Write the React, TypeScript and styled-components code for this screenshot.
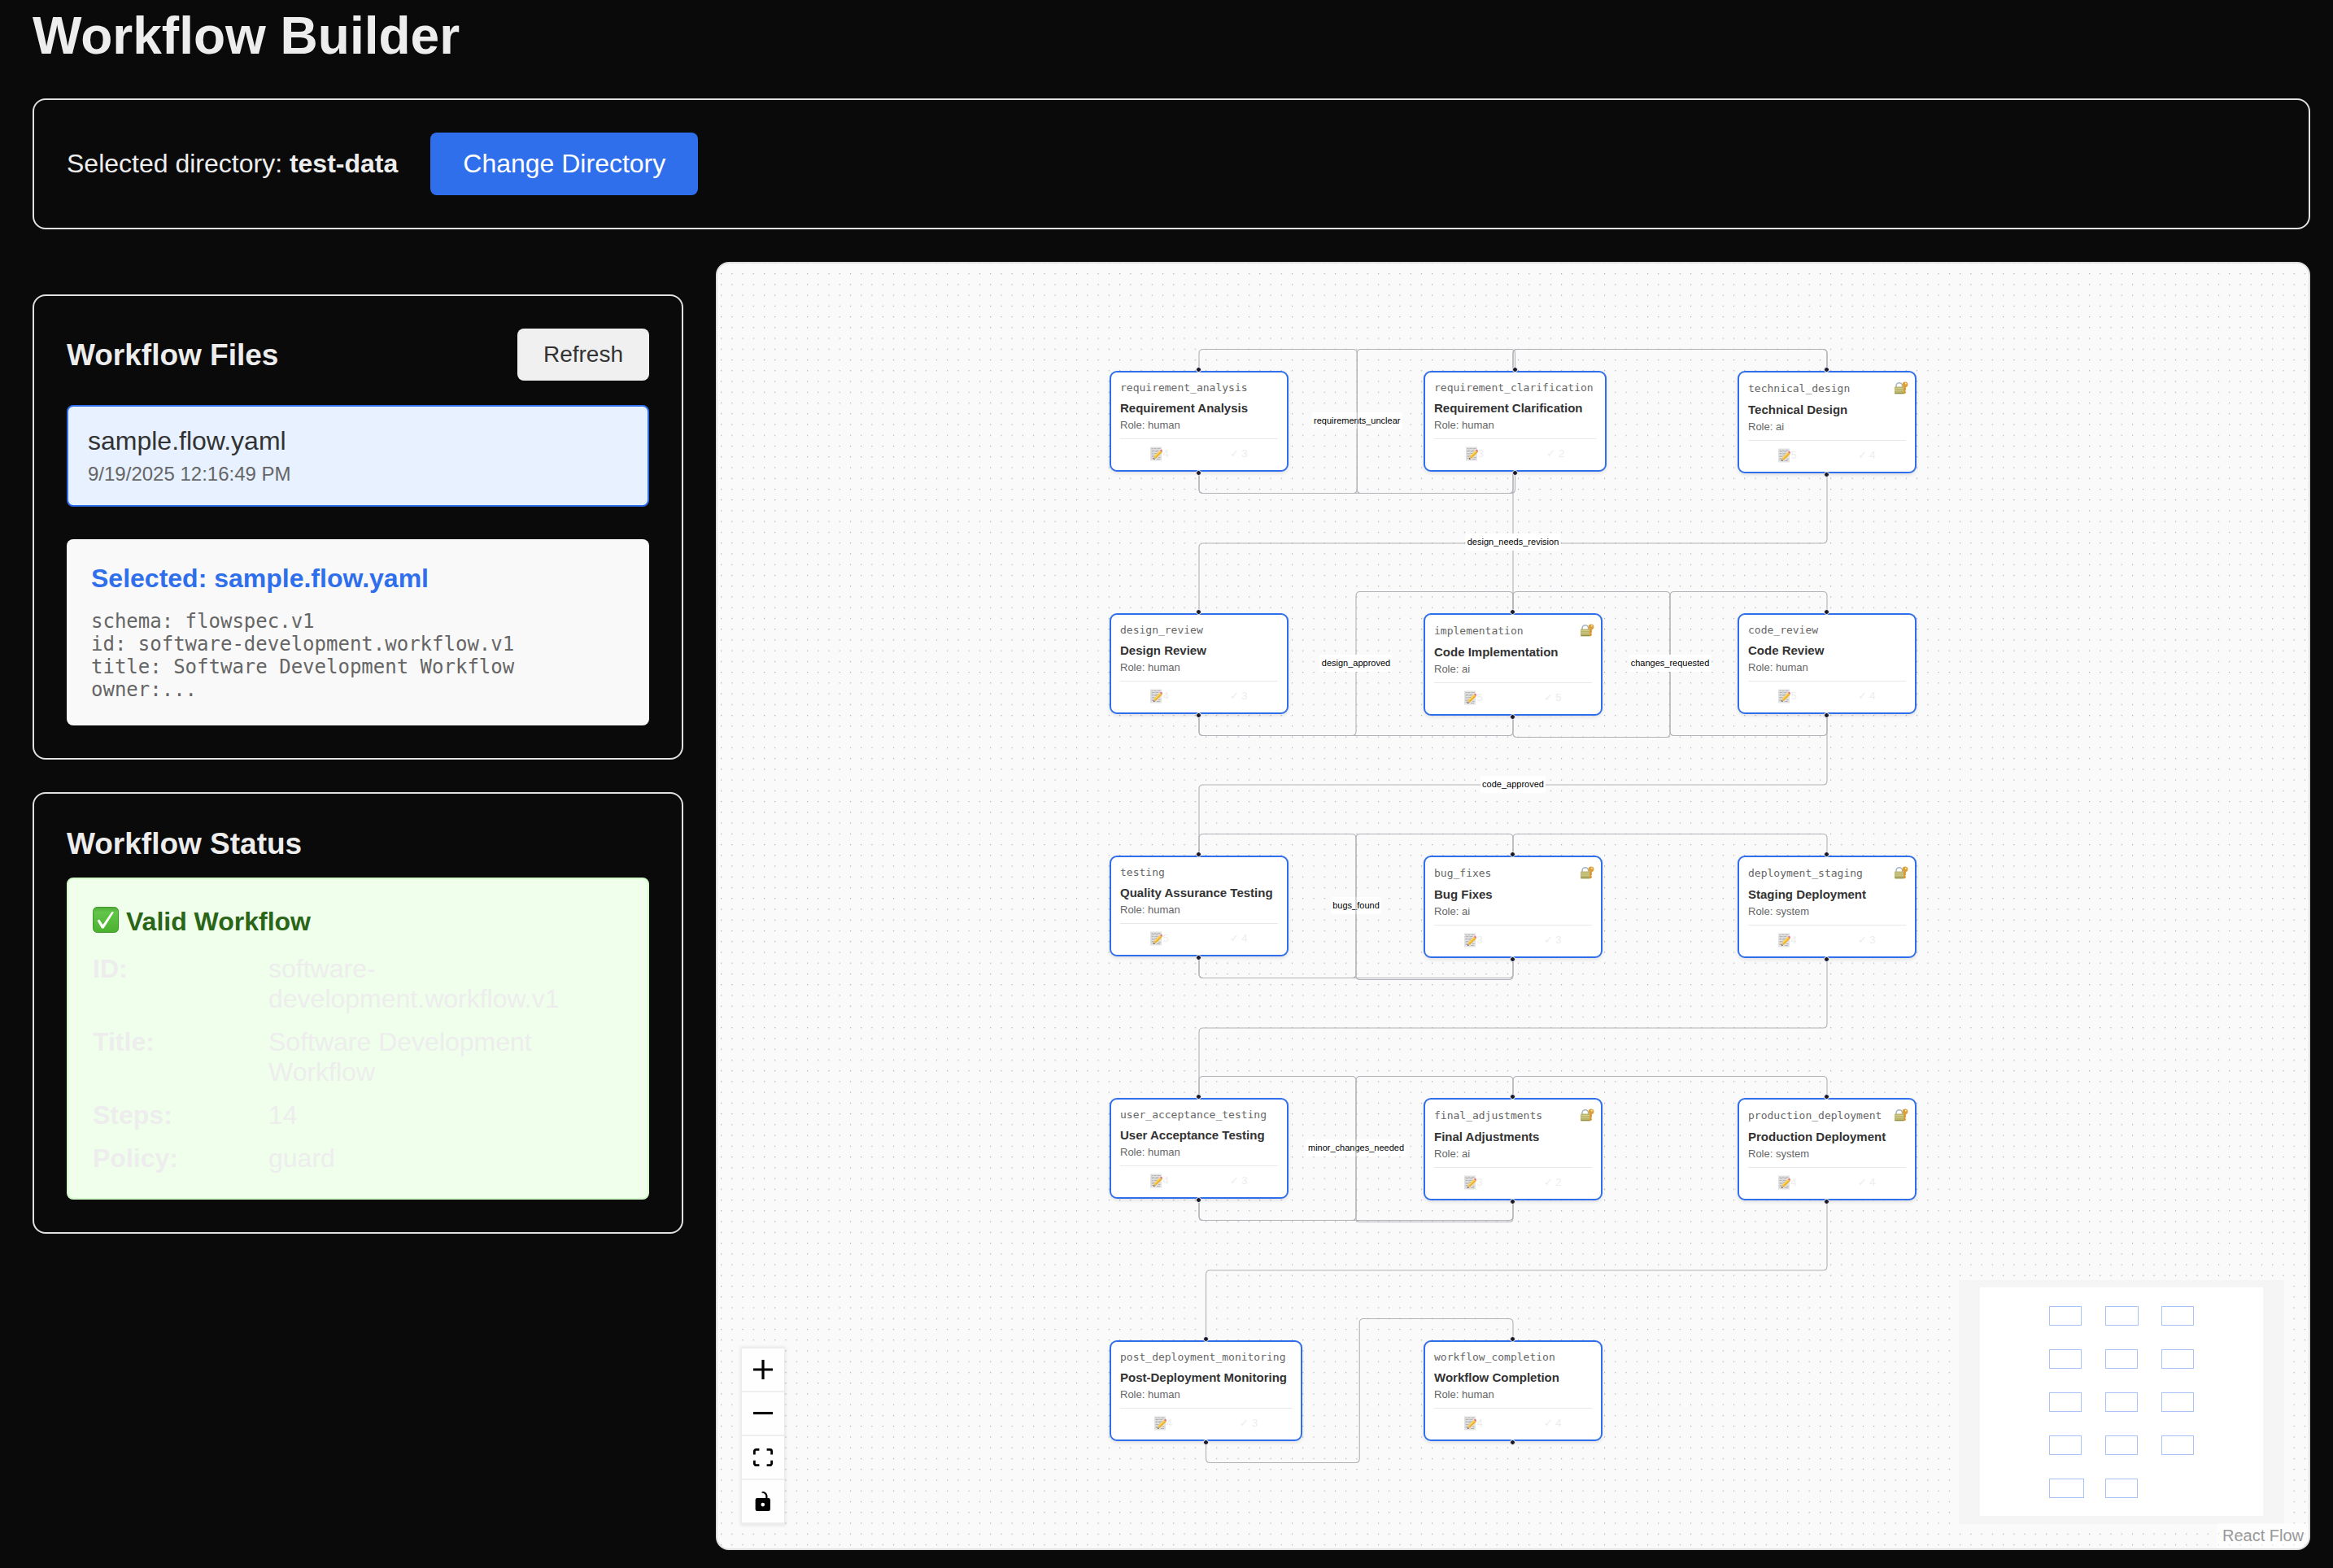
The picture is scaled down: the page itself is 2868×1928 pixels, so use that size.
import React from "react";
import styled, { createGlobalStyle } from "styled-components";

const SANS = `"Liberation Sans", Arial, Helvetica, sans-serif`;
const MONO = `"DejaVu Sans Mono", Menlo, monospace`;
const BLUE = "#2f6feb";

const GlobalStyle = createGlobalStyle`
  *, *::before, *::after { box-sizing: border-box; }
  body {
    margin: 0;
    background: #0a0a0a;
    color: #ededed;
    font-family: ${SANS};
    font-size: 32px;
    line-height: 37px;
  }
  h1, h2, h3, h4, p, pre, dl, dd { margin: 0; }
  button { font-family: inherit; cursor: pointer; }
`;

/* ---------- page ---------- */

const Page = styled.div`
  display: flex;
  flex-direction: column;
  gap: 40px;
  min-height: 100vh;
  padding: 8px 28px 22px 40px;
`;

const PageTitle = styled.h1`
  font-size: 64px;
  line-height: 73px;
  font-weight: 700;
`;

const Panel = styled.section`
  padding: 40px;
  border: 2px solid #e0e0e0;
  border-radius: 16px;
`;

const DirectoryBar = styled(Panel)`
  display: flex;
  align-items: center;
  gap: 40px;
`;

const PrimaryButton = styled.button`
  padding: 20px 40px;
  border: 0;
  border-radius: 8px;
  background: ${BLUE};
  color: #fff;
  font-size: 32px;
  line-height: 37px;
`;

const SecondaryButton = styled.button`
  padding: 16px 32px;
  border: 0;
  border-radius: 8px;
  background: #f0f0f0;
  color: #333;
  font-size: 28px;
  line-height: 32px;
`;

const Main = styled.main`
  flex: 1;
  display: grid;
  grid-template-columns: 800px minmax(0, 1fr);
  gap: 40px;
`;

const Sidebar = styled.aside`
  display: flex;
  flex-direction: column;
  gap: 40px;
  padding-top: 40px;
`;

const PanelHeader = styled.div`
  display: flex;
  align-items: center;
  justify-content: space-between;
  margin-bottom: 30px;
`;

const PanelTitle = styled.h2`
  font-size: 37px;
  line-height: 43px;
  font-weight: 700;
`;

const FileItem = styled.button`
  display: flex;
  flex-direction: column;
  gap: 8px;
  width: 100%;
  padding: 24px;
  border: 2px solid ${BLUE};
  border-radius: 8px;
  background: #e7f1ff;
  text-align: left;
`;

const FileName = styled.span`
  color: #333;
  font-size: 32px;
  line-height: 37px;
`;

const FileDate = styled.span`
  color: #666;
  font-size: 24px;
  line-height: 28px;
`;

const Preview = styled.div`
  display: flex;
  flex-direction: column;
  gap: 20px;
  margin-top: 40px;
  padding: 30px;
  border-radius: 8px;
  background: #f9f9f9;
`;

const PreviewTitle = styled.h3`
  color: ${BLUE};
  font-size: 32px;
  line-height: 37px;
`;

const PreviewCode = styled.pre`
  color: #666;
  font-family: ${MONO};
  font-size: 24px;
  line-height: 28px;
`;

const StatusBox = styled.div`
  margin-top: 20px;
  padding: 30px;
  border: 2px solid #d3fbc9;
  border-radius: 8px;
  background: #f0ffec;
`;

const StatusTitle = styled.h3`
  display: flex;
  align-items: flex-end;
  gap: 9px;
  min-height: 41px;
  margin-bottom: 21px;
  color: #2a6518;
  font-size: 32px;
  line-height: 37px;
`;

const Facts = styled.dl`
  display: grid;
  grid-template-columns: 200px 1fr;
  gap: 16px;
`;

const FactLabel = styled.dt`
  font-weight: 700;
`;

/* ---------- flow canvas ---------- */

const Canvas = styled.section`
  position: relative;
  display: flex;
  align-items: center;
  justify-content: center;
  overflow: hidden;
  border: 2px solid #ddd;
  border-radius: 16px;
  background: #fafafa;
`;

const Dots = styled.svg`
  position: absolute;
  inset: 0;
  width: 100%;
  height: 100%;
`;

const Scene = styled.div`
  position: relative;
  width: 994px;
  height: 1316px;
`;

const Edges = styled.svg`
  position: absolute;
  inset: 0;
  width: 100%;
  height: 100%;
  overflow: visible;
  font-family: ${SANS};
  font-size: 11px;
`;

const NodeCard = styled.article<{ $x: number; $y: number; $w: number }>`
  position: absolute;
  left: ${(p) => p.$x}px;
  top: ${(p) => p.$y}px;
  width: ${(p) => p.$w}px;
  padding: 11px;
  border: 2px solid ${BLUE};
  border-radius: 9px;
  background: #fff;
  box-shadow: 0 2px 4px rgba(0, 0, 0, 0.1);
  color: #666;
  font-size: 13px;
  line-height: 15px;
  white-space: nowrap;
`;

const NodeHead = styled.div`
  display: flex;
  align-items: center;
  justify-content: space-between;
  font-family: ${MONO};
`;

const NodeTitle = styled.h4`
  margin: 9px 0 5px;
  color: #333;
  font-size: 15px;
  line-height: 17px;
`;

const NodeStats = styled.div`
  display: flex;
  justify-content: space-around;
  margin-top: 9px;
  padding-top: 9px;
  border-top: 1px solid #e8e8e8;
  color: #ededed;
  line-height: 18px;
`;

const Stat = styled.span`
  display: flex;
  align-items: center;
`;

const Handle = styled.span<{ $side: "top" | "bottom" }>`
  position: absolute;
  left: 50%;
  ${(p) => p.$side}: -7px;
  width: 7px;
  height: 7px;
  margin-left: -4px;
  border: 1px solid #fff;
  border-radius: 50%;
  background: #1a192b;
`;

const Controls = styled.div`
  position: absolute;
  left: 30px;
  bottom: 30px;
  display: flex;
  flex-direction: column;
  box-shadow: 0 0 4px 2px rgba(0, 0, 0, 0.08);
`;

const ControlButton = styled.button`
  display: flex;
  align-items: center;
  justify-content: center;
  width: 52px;
  height: 54px;
  padding: 0;
  border: 0;
  border-bottom: 2px solid #eee;
  background: #fefefe;
  svg {
    width: 24px;
    max-height: 24px;
  }
`;

const MiniMap = styled.svg`
  position: absolute;
  right: 30px;
  bottom: 30px;
  width: 400px;
  height: 300px;
  background: #f5f5f5;
`;

const Attribution = styled.a`
  position: absolute;
  right: 0;
  bottom: 0;
  padding: 4px 6px;
  background: rgba(255, 255, 255, 0.5);
  color: #999;
  font-size: 20px;
  line-height: 23px;
  text-decoration: none;
`;

/* ---------- data ---------- */

type FlowNode = {
  id: string;
  title: string;
  role: string;
  col: number;
  row: number;
  notes: number;
  checks: number;
  locked?: boolean;
  width?: number;
};

const COLS = [1, 387, 773];
const ROW_PITCH = 298;

const nodes: FlowNode[] = [
  { id: "requirement_analysis", title: "Requirement Analysis", role: "human", col: 0, row: 0, notes: 4, checks: 3 },
  { id: "requirement_clarification", title: "Requirement Clarification", role: "human", col: 1, row: 0, notes: 3, checks: 2, width: 225 },
  { id: "technical_design", title: "Technical Design", role: "ai", col: 2, row: 0, notes: 5, checks: 4, locked: true },
  { id: "design_review", title: "Design Review", role: "human", col: 0, row: 1, notes: 4, checks: 3 },
  { id: "implementation", title: "Code Implementation", role: "ai", col: 1, row: 1, notes: 5, checks: 5, locked: true },
  { id: "code_review", title: "Code Review", role: "human", col: 2, row: 1, notes: 5, checks: 4 },
  { id: "testing", title: "Quality Assurance Testing", role: "human", col: 0, row: 2, notes: 5, checks: 4 },
  { id: "bug_fixes", title: "Bug Fixes", role: "ai", col: 1, row: 2, notes: 3, checks: 3, locked: true },
  { id: "deployment_staging", title: "Staging Deployment", role: "system", col: 2, row: 2, notes: 4, checks: 3, locked: true },
  { id: "user_acceptance_testing", title: "User Acceptance Testing", role: "human", col: 0, row: 3, notes: 4, checks: 3 },
  { id: "final_adjustments", title: "Final Adjustments", role: "ai", col: 1, row: 3, notes: 3, checks: 2, locked: true },
  { id: "production_deployment", title: "Production Deployment", role: "system", col: 2, row: 3, notes: 4, checks: 4, locked: true },
  { id: "post_deployment_monitoring", title: "Post-Deployment Monitoring", role: "human", col: 0, row: 4, notes: 4, checks: 3, width: 237 },
  { id: "workflow_completion", title: "Workflow Completion", role: "human", col: 1, row: 4, notes: 4, checks: 4 },
];

type FlowEdge = { from: string; to: string; label?: string; labelWidth?: number };

const edges: FlowEdge[] = [
  { from: "requirement_analysis", to: "requirement_clarification", label: "requirements_unclear", labelWidth: 111 },
  { from: "requirement_clarification", to: "requirement_analysis" },
  { from: "requirement_analysis", to: "technical_design" },
  { from: "technical_design", to: "design_review" },
  { from: "design_review", to: "technical_design", label: "design_needs_revision", labelWidth: 117 },
  { from: "design_review", to: "implementation", label: "design_approved", labelWidth: 89 },
  { from: "implementation", to: "code_review" },
  { from: "code_review", to: "implementation", label: "changes_requested", labelWidth: 101 },
  { from: "code_review", to: "testing", label: "code_approved", labelWidth: 80 },
  { from: "testing", to: "bug_fixes", label: "bugs_found", labelWidth: 61 },
  { from: "bug_fixes", to: "testing" },
  { from: "testing", to: "deployment_staging" },
  { from: "deployment_staging", to: "user_acceptance_testing" },
  { from: "user_acceptance_testing", to: "final_adjustments", label: "minor_changes_needed", labelWidth: 123 },
  { from: "final_adjustments", to: "user_acceptance_testing" },
  { from: "user_acceptance_testing", to: "production_deployment" },
  { from: "production_deployment", to: "post_deployment_monitoring" },
  { from: "post_deployment_monitoring", to: "workflow_completion" },
];

/* ---------- edge routing ---------- */

type Point = [number, number];

const box = (n: FlowNode) => ({
  x: COLS[n.col],
  y: n.row * ROW_PITCH,
  w: n.width ?? 220,
  h: n.locked ? 126 : 124,
});

const CORNER = 5;
const LANE = 26.5;

function roundedPath(points: Point[]) {
  return points
    .map(([x, y], i) => {
      if (i === 0) return `M${x} ${y}`;
      if (i === points.length - 1) return `L${x} ${y}`;
      const [px, py] = points[i - 1];
      const [nx, ny] = points[i + 1];
      const ax = x - Math.sign(x - px) * CORNER;
      const ay = y - Math.sign(y - py) * CORNER;
      const bx = x + Math.sign(nx - x) * CORNER;
      const by = y + Math.sign(ny - y) * CORNER;
      return `L${ax} ${ay}Q${x} ${y} ${bx} ${by}`;
    })
    .join("");
}

function route(edge: FlowEdge) {
  const a = box(nodes.find((n) => n.id === edge.from)!);
  const b = box(nodes.find((n) => n.id === edge.to)!);
  const sx = a.x + a.w / 2;
  const sy = a.y + a.h;
  const tx = b.x + b.w / 2;
  const ty = b.y;
  if (ty > sy) {
    const my = (sy + ty) / 2;
    return {
      d: roundedPath([[sx, sy], [sx, my], [tx, my], [tx, ty]]),
      lx: (sx + tx) / 2,
      ly: my,
    };
  }
  const mx = (sx + tx) / 2;
  const low = sy + LANE;
  const high = ty - LANE;
  return {
    d: roundedPath([[sx, sy], [sx, low], [mx, low], [mx, high], [tx, high], [tx, ty]]),
    lx: mx,
    ly: (low + high) / 2,
  };
}

/* ---------- icons ---------- */

const CheckBadge = () => (
  <svg width="32" height="37" viewBox="0 0 32 37" aria-hidden="true">
    <defs>
      <linearGradient id="badge" x1="0" y1="0" x2="0" y2="1">
        <stop offset="0" stopColor="#4fae3a" />
        <stop offset="0.2" stopColor="#62c548" />
        <stop offset="1" stopColor="#4bb02f" />
      </linearGradient>
    </defs>
    <rect x="0.5" y="0.5" width="31" height="31" rx="5" fill="url(#badge)" stroke="#3f9a2c" />
    <path d="M5.500 17l2.500-1.500 4.500 6.500L23.500 6l2.500.4L13.500 26.500h-2.500z" fill="#fff" />
  </svg>
);

const MemoIcon = () => (
  <svg width="15" height="18" viewBox="0 0 15 18" aria-hidden="true">
    <rect x="0" y="0.5" width="14" height="17" fill="#e2e2e2" />
    <path
      d="M1.500 2.500h2M4.500 2.500h3M8.500 2.500h4M1.500 4.500h4M6.500 4.500h4M1.500 6.500h3M5.500 6.500h4M1.500 8.500h2M4.500 8.500h4M1.500 10.500h4M1.500 12.500h3M1.500 14.500h3M10 13.500h2.500M8 15.500h4"
      stroke="#b4b4b4"
    />
    <path d="M4 16l1-4 7-7 2.500 2.300-7.400 7.200z" fill="#eeb022" />
    <path d="M5 12l7-7 1.200 1-7.200 7z" fill="#fbd75a" />
    <path d="M12 5l1-1.200q.7-.4 1.400.4t.4 1.400L14.500 7.300z" fill="#e8707a" />
    <path d="M4 16l1-4 1 1 1.100 1.500z" fill="#e0bd90" />
    <path d="M4 16l.5-1.900 1.300 1.300z" fill="#4a4030" />
  </svg>
);

const LockKeyIcon = () => (
  <svg width="14" height="17" viewBox="0 0 14 17" overflow="visible" aria-hidden="true">
    <path d="M2 8V5.500a3.800 3.800 0 0 1 7.600 0V8" fill="none" stroke="#a3b4bf" strokeWidth="1.500" />
    <rect x="0" y="6.500" width="11.500" height="9" rx="0.8" fill="#b9b468" />
    <path d="M0.500 8.500h10.500M0.500 11h10.500" stroke="#d3cf94" />
    <path d="M0.500 14.500h10.500" stroke="#928c4e" />
    <path d="M11.700 6v9l1.600-.8v-1.700l-.8-.7.8-.7V6z" fill="#d9982c" stroke="#d9982c" />
    <circle cx="13" cy="3.800" r="3.400" fill="#dda038" />
    <circle cx="13.800" cy="2.600" r="0.9" fill="#fff3d0" />
  </svg>
);

const controlIcons = [
  {
    name: "zoom in",
    box: "0 0 32 32",
    d: "M32 18.133H18.133V32h-4.266V18.133H0v-4.266h13.867V0h4.266v13.867H32z",
  },
  { name: "zoom out", box: "0 0 32 5", d: "M0 0h32v4.2H0z" },
  {
    name: "fit view",
    box: "0 0 32 30",
    d: "M3.692 4.63c0-.53.4-.938.939-.938h5.215V0H4.708C2.13 0 0 2.054 0 4.63v5.216h3.692V4.631zM27.354 0h-5.2v3.692h5.17c.53 0 .984.4.984.939v5.215H32V4.631A4.624 4.624 0 0027.354 0zm.954 24.83c0 .532-.4.94-.939.94h-5.215v3.768h5.215c2.577 0 4.631-2.13 4.631-4.707v-5.139h-3.692v5.139zm-23.677.94c-.531 0-.939-.4-.939-.94v-5.138H0v5.139c0 2.577 2.13 4.707 4.708 4.707h5.138V25.77H4.631z",
  },
  {
    name: "toggle interactivity",
    box: "0 0 25 32",
    d: "M21.333 10.667H19.81V7.619C19.81 3.429 16.38 0 12.19 0c-4.114 1.828-1.37 2.133.305 2.438 1.676.305 4.42 2.59 4.42 5.181v3.048H3.047A3.056 3.056 0 000 13.714v15.238A3.056 3.056 0 003.048 32h18.285a3.056 3.056 0 003.048-3.048V13.714a3.056 3.056 0 00-3.048-3.047zM12.19 24.533a3.056 3.056 0 01-3.047-3.047 3.056 3.056 0 013.047-3.048 3.056 3.056 0 013.048 3.048 3.056 3.056 0 01-3.048 3.047z",
  },
];

/* ---------- parts ---------- */

const StepNode = ({ node }: { node: FlowNode }) => {
  const { x, y, w } = box(node);
  return (
    <NodeCard $x={x} $y={y} $w={w}>
      <Handle $side="top" />
      <NodeHead>
        <span>{node.id}</span>
        {node.locked && <LockKeyIcon />}
      </NodeHead>
      <NodeTitle>{node.title}</NodeTitle>
      <div>Role: {node.role}</div>
      <NodeStats>
        <Stat>
          <MemoIcon />
          {node.notes}
        </Stat>
        <Stat>✓ {node.checks}</Stat>
      </NodeStats>
      <Handle $side="bottom" />
    </NodeCard>
  );
};

const FlowCanvas = () => (
  <Canvas aria-label="Workflow diagram">
    <Dots aria-hidden="true">
      <pattern id="dots" x="4" y="12" width="13.244" height="13.244" patternUnits="userSpaceOnUse">
        <circle cx="0.6" cy="0.6" r="0.6" fill="#91919a" />
      </pattern>
      <rect width="100%" height="100%" fill="url(#dots)" />
    </Dots>
    <Scene>
      <Edges>
        {edges.map((edge) => {
          const { d, lx, ly } = route(edge);
          return (
            <g key={`${edge.from}-${edge.to}`}>
              <path d={d} fill="none" stroke="#b1b1b7" strokeWidth="1.100" />
              {edge.label && edge.labelWidth && (
                <>
                  <rect x={lx - edge.labelWidth / 2} y={ly - 11} width={edge.labelWidth} height="21" rx="2" fill="#fff" />
                  <text x={lx} y={ly + 3} textAnchor="middle" fill="#000">
                    {edge.label}
                  </text>
                </>
              )}
            </g>
          );
        })}
      </Edges>
      {nodes.map((node) => (
        <StepNode key={node.id} node={node} />
      ))}
    </Scene>
    <Controls>
      {controlIcons.map((icon) => (
        <ControlButton key={icon.name} type="button" aria-label={icon.name}>
          <svg viewBox={icon.box}>
            <path d={icon.d} />
          </svg>
        </ControlButton>
      ))}
    </Controls>
    <MiniMap viewBox="0 0 400 300" role="img" aria-label="Mini map">
      <rect x="26" y="9" width="348" height="281" fill="#fff" />
      {nodes.map((n) => (
        <rect
          key={n.id}
          x={111.5 + n.col * 69}
          y={32.5 + n.row * 53}
          width={Math.round(box(n).w * 0.178)}
          height="23"
          fill="none"
          stroke="#a9c3f7"
        />
      ))}
    </MiniMap>
    <Attribution href="#">React Flow</Attribution>
  </Canvas>
);

const previewText = `schema: flowspec.v1
id: software-development.workflow.v1
title: Software Development Workflow
owner:...`;

const facts = [
  ["ID:", "software-development.workflow.v1"],
  ["Title:", "Software Development Workflow"],
  ["Steps:", "14"],
  ["Policy:", "guard"],
];

export default function App() {
  return (
    <Page>
      <GlobalStyle />
      <PageTitle>Workflow Builder</PageTitle>
      <DirectoryBar>
        <p>
          Selected directory: <strong>test-data</strong>
        </p>
        <PrimaryButton type="button">Change Directory</PrimaryButton>
      </DirectoryBar>
      <Main>
        <Sidebar>
          <Panel>
            <PanelHeader>
              <PanelTitle>Workflow Files</PanelTitle>
              <SecondaryButton type="button">Refresh</SecondaryButton>
            </PanelHeader>
            <FileItem type="button">
              <FileName>sample.flow.yaml</FileName>
              <FileDate>9/19/2025 12:16:49 PM</FileDate>
            </FileItem>
            <Preview>
              <PreviewTitle>Selected: sample.flow.yaml</PreviewTitle>
              <PreviewCode>{previewText}</PreviewCode>
            </Preview>
          </Panel>
          <Panel>
            <PanelTitle>Workflow Status</PanelTitle>
            <StatusBox>
              <StatusTitle>
                <CheckBadge />
                Valid Workflow
              </StatusTitle>
              <Facts>
                {facts.map(([label, value]) => (
                  <React.Fragment key={label}>
                    <FactLabel>{label}</FactLabel>
                    <dd>{value}</dd>
                  </React.Fragment>
                ))}
              </Facts>
            </StatusBox>
          </Panel>
        </Sidebar>
        <FlowCanvas />
      </Main>
    </Page>
  );
}
